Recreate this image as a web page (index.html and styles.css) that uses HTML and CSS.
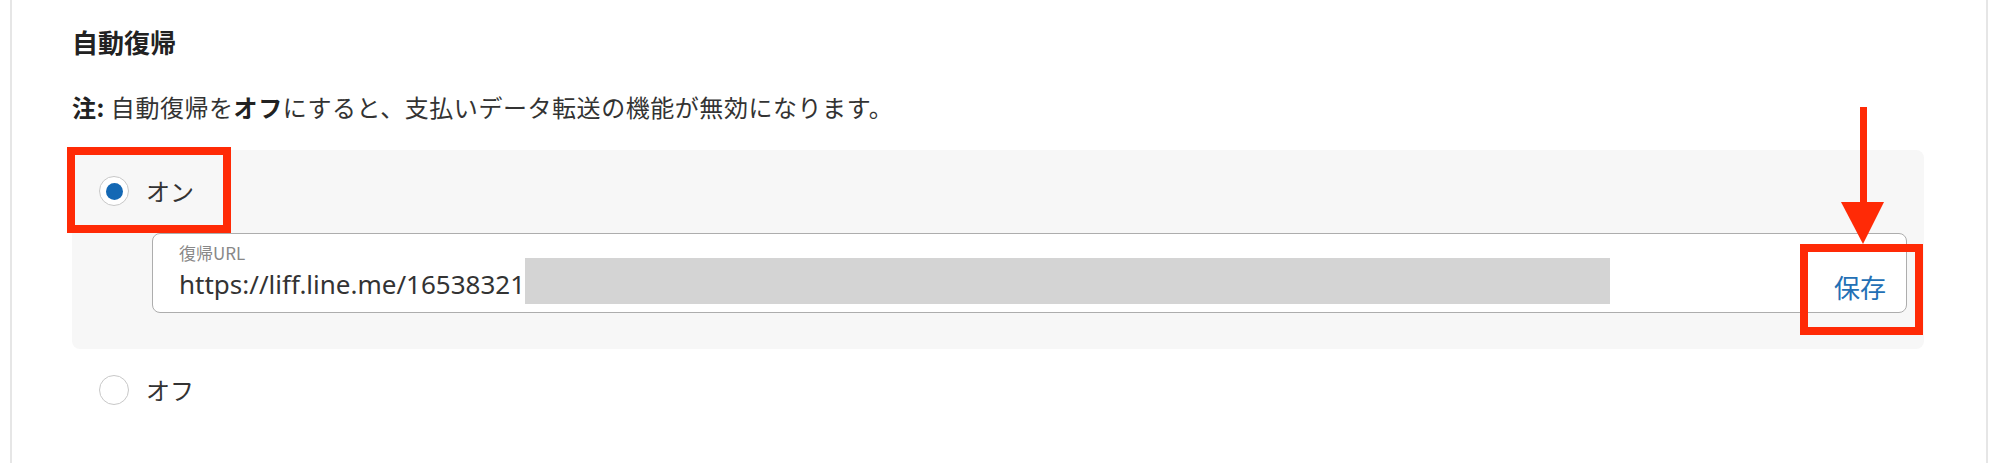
FILE: index.html
```html
<html lang="ja">

<head>
  <meta charset="utf-8">
  <title>自動復帰</title>
  <link rel="stylesheet" href="styles.css">
</head>

<body>

  <div class="page">
    <h2 class="title">自動復帰</h2>
    <p class="note"><b>注:</b> 自動復帰を<b>オフ</b>にすると、支払いデータ転送の機能が無効になります。</p>

    <div class="option-box">
      <div class="radio-row">
        <span class="radio checked"></span>
        <span class="radio-label">オン</span>
      </div>
      <div class="url-field">
        <div class="url-main">
          <div class="url-label">復帰URL</div>
          <div class="url-value"><span>https://liff.line.me/16538321</span><span class="redact"></span></div>
        </div>
        <button class="save">保存</button>
      </div>
    </div>

    <div class="radio-row off">
      <span class="radio"></span>
      <span class="radio-label">オフ</span>
    </div>
  </div>

  <!-- annotations drawn on top of the screenshot -->
  <div class="mark mark-on"></div>
  <div class="mark mark-save"></div>
  <svg class="arrow" width="43" height="137" viewBox="0 0 43 137">
    <rect x="19" y="0" width="7" height="97" fill="#ff2a06" />
    <polygon points="0,95 43,95 22,137" fill="#ff2a06" />
  </svg>

</body>

</html>
```

FILE: styles.css
```css
body {
  margin: 0;
  background-color: #fff;
  font-family: "Noto Sans CJK JP", "Noto Sans", sans-serif;
  color: #333;
  position: relative;
  height: 463px;
  overflow: hidden;
}

.page {
  margin: 0 11px 0 10px;
  border-left: 2px solid #e6e6e6;
  border-right: 2px solid #e6e6e6;
  height: 463px;
  box-sizing: border-box;
  padding: 29px 62px 0 60px;
}

.title {
  margin: 0;
  font-size: 26px;
  line-height: 26px;
  font-weight: 700;
  color: #222;
}

.note {
  margin: 40px 0 0;
  font-size: 24px;
  line-height: 24px;
  letter-spacing: 0.55px;
}

.note b {
  color: #222;
}

.option-box {
  margin-top: 31px;
  background-color: #f7f7f7;
  border-radius: 8px;
  padding: 26px 17px 36px 27px;
}

.radio-row {
  display: flex;
  align-items: center;
  gap: 17px;
  height: 30px;
  font-size: 24px;
  line-height: 24px;
}

.radio-row.off {
  margin-top: 26px;
  padding-left: 27px;
}

.radio {
  width: 30px;
  height: 30px;
  box-sizing: border-box;
  border: 1.5px solid #c8c8c8;
  border-radius: 50%;
  background-color: #fff;
  display: flex;
  align-items: center;
  justify-content: center;
}

.radio.checked::after {
  content: "";
  width: 17px;
  height: 17px;
  border-radius: 50%;
  background-color: #1468b4;
}

.url-field {
  margin: 27px 0 0 53px;
  height: 80px;
  box-sizing: border-box;
  display: flex;
  border: 1.5px solid #adadad;
  border-radius: 8px;
  background-color: #fff;
  padding: 0 20px 0 26px;
}

.url-main {
  flex: 1;
  padding-top: 10px;
}

.url-label {
  font-size: 17px;
  line-height: 17px;
  color: #888;
}

.url-value {
  margin-top: 8px;
  display: flex;
  align-items: flex-start;
  font-family: "Noto Sans", sans-serif;
  font-size: 26px;
  line-height: 30px;
  color: #333;
}

.redact {
  width: 1085px;
  height: 46px;
  margin-top: -11px;
  background-color: #d4d4d4;
}

.save {
  align-self: flex-end;
  margin-bottom: 12px;
  padding: 0;
  border: 0;
  background: none;
  font-family: "Noto Sans CJK JP", sans-serif;
  font-size: 26px;
  line-height: 26px;
  color: #2370b5;
}

.mark {
  position: absolute;
  border: 8px solid #ff2a06;
  box-sizing: border-box;
}

.mark-on {
  left: 67px;
  top: 147px;
  width: 164px;
  height: 86px;
}

.mark-save {
  left: 1800px;
  top: 244px;
  width: 123px;
  height: 91px;
}

.arrow {
  position: absolute;
  left: 1841px;
  top: 107px;
}
```
